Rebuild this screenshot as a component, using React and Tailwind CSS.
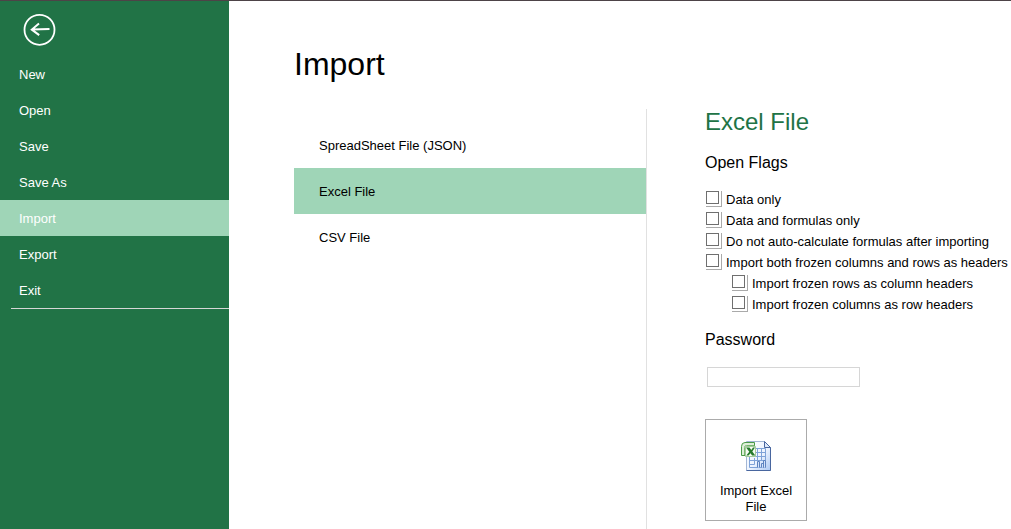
import React from "react";

const menuItems = ["New", "Open", "Save", "Save As", "Import", "Export", "Exit"];
const fileTypes = ["SpreadSheet File (JSON)", "Excel File", "CSV File"];
const flags = [
  { id: "data-only", label: "Data only" },
  { id: "data-formulas", label: "Data and formulas only" },
  { id: "no-calc", label: "Do not auto-calculate formulas after importing" },
  { id: "frozen-both", label: "Import both frozen columns and rows as headers" },
  { id: "frozen-rows", label: "Import frozen rows as column headers", nested: true },
  { id: "frozen-columns", label: "Import frozen columns as row headers", nested: true },
];

function BackIcon() {
  return (
    <svg width="34" height="34" viewBox="0 0 34 34" fill="none" stroke="white" aria-hidden="true">
      <circle cx="16.5" cy="16.8" r="15" strokeWidth="1.8" />
      <path d="M26.5 15.9 8.8 16.6M16 10.5 8.8 16.6l7.400 5.500" strokeWidth="2" />
    </svg>
  );
}

function ExcelIcon() {
  return (
    <svg width="32" height="32" viewBox="0 0 32 32" aria-hidden="true">
      <defs>
        <linearGradient id="page" x1="0" y1="0" x2="1" y2="1">
          <stop offset="0" stopColor="#ffffff" />
          <stop offset="0.55" stopColor="#edf4ff" />
          <stop offset="1" stopColor="#abc8f2" />
        </linearGradient>
      </defs>
      <path d="M6.5 1.5h18l6 6v23h-24z" fill="url(#page)" stroke="#a3b7d6" />
      <path d="M30.5 7.5v23h-24" fill="none" stroke="#49669f" />
      <path d="M24.5 1.5v6h6z" fill="#dce9fb" stroke="#49669f" strokeLinejoin="round" />
      <path d="M15 8.500h10.500v12H9.500V17M15 12.500h10.500M15 16.500h10.500M17.500 8.500v12M21.500 8.500v12M9.500 20v7.500H26M14.500 18v6.500h-5" fill="none" stroke="#7fa3d8" />
      <path d="M17.500 27.500v-6h2v6M21.500 27.500v-4h2v4M23.500 27.500v-7h2v7" fill="#d4e3fa" stroke="#5d83bf" />
      <path d="M5 2.500h9.500V15.500H1.500V6.500q0-4 3.500-4z" fill="#deefd9" stroke="#4a9a48" />
      <path d="M4.500 15V7.500q0-2 2-2h8" fill="none" stroke="#79b672" />
      <path d="M5.500 6.500h10v10h-10z" fill="#f6fbf3" stroke="#a3cb9c" />
      <path d="M6 7.500h3.500l1.800 2.600L13 7.500h2l-2.700 4 3 4h-3.200l-1.600-2.200-2 2.200H6.300l3-3.700z" fill="#257a2b" />
    </svg>
  );
}

function Flag({ id, label, nested }) {
  return (
    <div className={nested ? "flex h-[21px] items-center gap-1 pl-[27px]" : "flex h-[21px] items-center gap-1 pl-px"}>
      <span className="flex size-4 shrink-0 border-r border-b border-[#aaaaaa]">
        <input
          id={id}
          type="checkbox"
          className="size-[13px] appearance-none border border-[#6f6f6f] bg-white checked:bg-[#217346]"
        />
      </span>
      <label htmlFor={id} className="mt-0.5 whitespace-nowrap">{label}</label>
    </div>
  );
}

export default function App() {
  return (
    <div className="flex min-h-screen flex-col overflow-x-hidden border-t border-[#4d4347] bg-white font-['Liberation_Sans',Arial,sans-serif] text-[13px] leading-4 text-black">
      <div className="flex flex-1">
        <nav className="w-[229px] shrink-0 bg-[#217346] text-white">
          <div className="flex h-[55px] pt-3 pl-[23px]">
            <button type="button" aria-label="Back" className="size-[34px]">
              <BackIcon />
            </button>
          </div>
          {menuItems.map((item) => (
            <button
              key={item}
              type="button"
              className={item === "Import" ? "block h-9 w-full bg-[#9fd5b7] pt-0.5 pl-[19px] text-left" : "block h-9 w-full pt-0.5 pl-[19px] text-left"}
            >
              {item}
            </button>
          ))}
          <hr className="ml-[11px] border-[#d6d6d6]" />
        </nav>

        <main className="flex min-w-0 flex-1 flex-col pl-[65px]">
          <h1 className="flex h-[108px] items-start pt-[45px] text-[32px] leading-9">Import</h1>
          <div className="flex flex-1">
            <div className="w-[353px] shrink-0 border-r border-[#e1e1e1] pt-[13px]">
              {fileTypes.map((type) => (
                <button
                  key={type}
                  type="button"
                  className={type === "Excel File" ? "block h-[46px] w-full bg-[#9fd5b7] pt-0.5 pl-[25px] text-left" : "block h-[46px] w-full pt-0.5 pl-[25px] text-left"}
                >
                  {type}
                </button>
              ))}
            </div>

            <section className="min-w-0 flex-1 pb-2 pl-[58px]">
              <h2 className="text-2xl leading-[26px] text-[#217346]">Excel File</h2>
              <h3 className="mt-[18px] text-base leading-5">Open Flags</h3>
              <div className="mt-[15px]">
                {flags.map((flag) => (
                  <Flag key={flag.id} {...flag} />
                ))}
              </div>
              <label htmlFor="password" className="mt-4 block text-base leading-5">Password</label>
              <input
                id="password"
                type="password"
                className="mt-[17px] ml-0.5 block h-5 w-[153px] border border-[#d6d6d6] px-1"
              />
              <button
                type="button"
                className="mt-8 flex size-[102px] flex-col items-center border border-[#ababab] px-2 pt-5"
              >
                <ExcelIcon />
                <span className="mt-[11px]">Import Excel File</span>
              </button>
            </section>
          </div>
        </main>
      </div>
    </div>
  );
}
